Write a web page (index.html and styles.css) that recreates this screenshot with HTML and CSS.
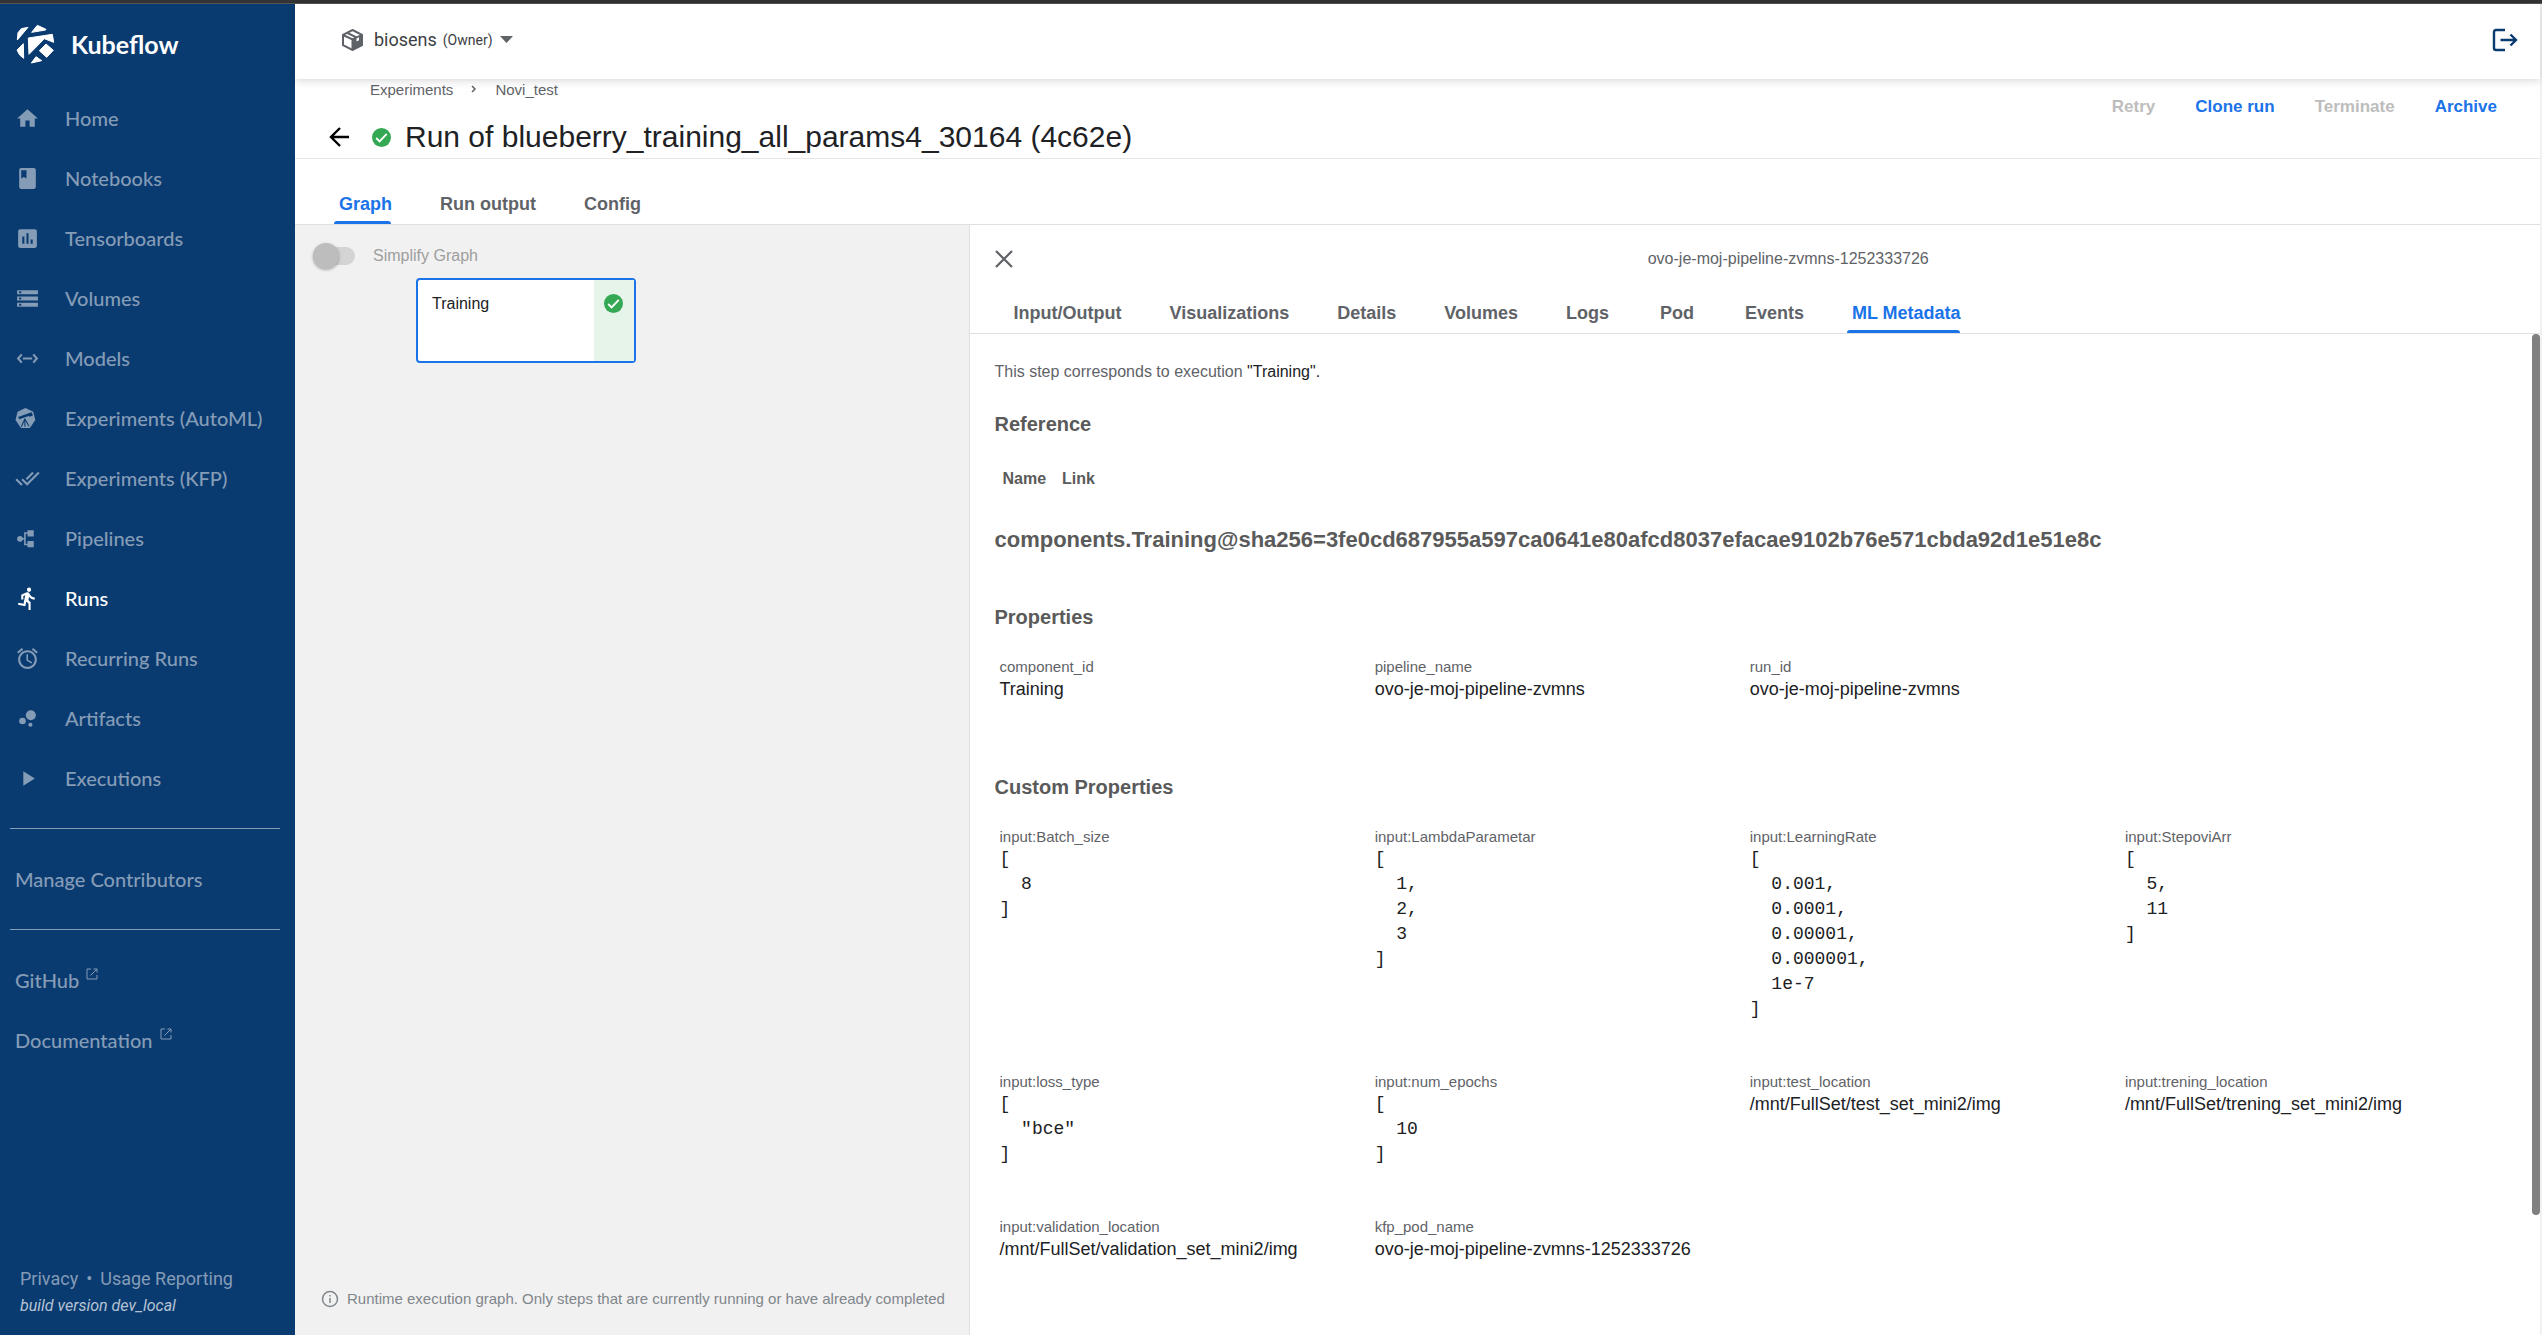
FILE: index.html
```html
<!DOCTYPE html>
<html lang="en">
<head>
<meta charset="utf-8">
<title>Kubeflow Central Dashboard</title>
<link rel="stylesheet" href="styles.css">
</head>
<body>
<div class="window-edge"></div>
<div class="app">
  <aside class="sidebar">
    <a class="brand" href="#">
      <svg class="brand-logo" viewBox="47 72 117 120" aria-hidden="true"><g fill="#fff" stroke="#fff" stroke-width="3" stroke-linejoin="round"><path d="M51 120L53 98 63 86 83 82zM94 97L111 76 137 88 136 90zM50 150L69 131 70 175 58 165zM84 114L156 103 160 127 132 116 86 163zM117 152L137 132 159 151 139 172zM107 170L124 182 93 189z"/></g></svg>
      <span>Kubeflow</span>
    </a>
    <nav class="nav">
      <a class="nav-item" href="#"><svg class="icon" viewBox="0 0 24 24"><path d="M10 20v-6h4v6h5v-8h3L12 3 2 12h3v8z"/></svg>Home</a>
      <a class="nav-item" href="#"><svg class="icon" viewBox="0 0 24 24"><path fill-rule="evenodd" d="M18 2H6c-1.100 0-2 .9-2 2v16c0 1.100.9 2 2 2h12c1.100 0 2-.9 2-2V4c0-1.100-.9-2-2-2zM6 4h5v8l-2.500-1.500L6 12V4z"/></svg>Notebooks</a>
      <a class="nav-item" href="#"><svg class="icon" viewBox="0 0 24 24"><path d="M19 3H5c-1.100 0-2 .9-2 2v14c0 1.100.9 2 2 2h14c1.100 0 2-.9 2-2V5c0-1.100-.9-2-2-2zM9 17H7v-7h2v7zm4 0h-2V7h2v10zm4 0h-2v-4h2v4z"/></svg>Tensorboards</a>
      <a class="nav-item" href="#"><svg class="icon" viewBox="0 0 24 24"><path d="M2 20h20v-4H2v4zm2-3h2v2H4v-2zM2 4v4h20V4H2zm4 3H4V5h2v2zm-4 7h20v-4H2v4zm2-3h2v2H4v-2z"/></svg>Volumes</a>
      <a class="nav-item" href="#"><svg class="icon line" viewBox="0 0 24 24"><path d="M6.500 8L3 12l3.500 4M17.500 8L21 12l-3.500 4M7.500 12h9"/></svg>Models</a>
      <a class="nav-item" href="#"><svg class="icon" viewBox="0 0 24 24"><path d="M10 2l7.500 3.500 2 8-5.200 7.500H5.700L.5 13.500l2-8z"/><path class="cut" d="M3 10.500l10-3.500 3-1 1.200 3.200-3 1-1-.6L4 12.700z"/><path class="cut-line" d="M9.500 12v8M9.500 12.500L6 20M9.500 12.500l4 7"/></svg>Experiments (AutoML)</a>
      <a class="nav-item" href="#"><svg class="icon" viewBox="0 0 24 24"><path d="M18 7l-1.410-1.410-6.340 6.340 1.410 1.410L18 7zm4.240-1.410L11.660 16.170 7.480 12l-1.410 1.410L11.660 19l12-12-1.420-1.410zM.41 13.410L6 19l1.410-1.410L1.830 12 .41 13.410z"/></svg>Experiments (KFP)</a>
      <a class="nav-item" href="#"><svg class="icon" viewBox="0 0 24 24"><path d="M12 4h6v6h-6zM12 14.500h6v6h-6z"/><circle cx="4.800" cy="12.300" r="2.800"/><path class="thin" d="M5 12.300h4.500M13 6.800H9.500v11H13"/></svg>Pipelines</a>
      <a class="nav-item active" href="#"><svg class="icon" viewBox="0 0 24 24"><path d="M13.490 5.480c1.100 0 2-.9 2-2s-.9-2-2-2-2 .9-2 2 .9 2 2 2zm-3.600 13.900l1-4.400 2.100 2v6h2v-7.500l-2.100-2 .6-3c1.300 1.500 3.300 2.500 5.500 2.500v-2c-1.900 0-3.500-1-4.300-2.400l-1-1.600c-.4-.6-1-1-1.700-1-.3 0-.5.1-.8.1l-5.200 2.200v4.700h2v-3.400l1.800-.7-1.600 8.100-4.900-1-.4 2 7 1.400z"/></svg>Runs</a>
      <a class="nav-item" href="#"><svg class="icon" viewBox="0 0 24 24"><path d="M22 5.720l-4.600-3.860-1.290 1.530 4.600 3.860L22 5.720zM7.880 3.390L6.600 1.860 2 5.710l1.290 1.530 4.590-3.850zM12.500 8H11v6l4.750 2.850.75-1.230-4-2.370V8zM12 4c-4.970 0-9 4.030-9 9s4.020 9 9 9c4.970 0 9-4.030 9-9s-4.030-9-9-9zm0 16c-3.870 0-7-3.130-7-7s3.130-7 7-7 7 3.130 7 7-3.130 7-7 7z"/></svg>Recurring Runs</a>
      <a class="nav-item" href="#"><svg class="icon" viewBox="0 0 24 24"><circle cx="7.200" cy="14.400" r="3.200"/><circle cx="14.800" cy="18" r="2"/><circle cx="15.200" cy="8.800" r="4.800"/></svg>Artifacts</a>
      <a class="nav-item" href="#"><svg class="icon" viewBox="0 0 24 24"><path d="M8 5v14l11-7z"/></svg>Executions</a>
      <hr class="nav-rule">
      <a class="nav-item plain" href="#">Manage Contributors</a>
      <hr class="nav-rule">
      <a class="nav-item plain" href="#">GitHub<svg class="ext" viewBox="0 0 12 12"><path d="M5 1H1v10h10V7M7.500 1H11v3.500M11 1L4.500 7.500"/></svg></a>
      <a class="nav-item plain" href="#">Documentation<svg class="ext" viewBox="0 0 12 12"><path d="M5 1H1v10h10V7M7.500 1H11v3.500M11 1L4.500 7.500"/></svg></a>
    </nav>
    <footer class="side-footer">
      <div class="legal"><a href="#">Privacy</a><span>•</span><a href="#">Usage Reporting</a></div>
      <em class="build">build version dev_local</em>
    </footer>
  </aside>

  <main class="content">
    <header class="topbar">
      <button class="namespace" type="button">
        <svg class="cube" viewBox="0 0 21 22"><path d="M10.500 1L20 5.800v10.400L10.500 21 1 16.200V5.800z" fill="#fff" stroke="#5f6368" stroke-width="2"/><path d="M10.500 10.500L20 6v10.200L10.500 21z" fill="#5f6368"/><path d="M1 6l9.500 4.500L20 6M10.500 10.500V21M5.500 4l9.500 4.600" fill="none" stroke="#5f6368" stroke-width="2"/><path d="M14.500 9.500l2.500-1.200v3l-2.500 1.200z" fill="#fff"/></svg>
        <span class="ns-name">biosens</span><span class="ns-role">(Owner)</span>
        <svg class="caret" viewBox="0 0 13 7"><path d="M0 0h13L6.500 7z" fill="#5f6368"/></svg>
      </button>
      <a class="logout" href="#" aria-label="Logout"><svg viewBox="0 0 26 24"><path d="M13 2H4Q2 2 2 4v16q0 2 2 2h9M8.500 12H24M18.500 6.500L24 12l-5.500 5.500" fill="none" stroke="#0a3b70" stroke-width="2.400"/></svg></a>
    </header>

    <section class="toolbar">
      <div class="heading">
        <nav class="crumbs"><a href="#">Experiments</a><svg viewBox="0 0 6 8"><path d="M1 1l3 3-3 3" fill="none" stroke="#5f6368" stroke-width="1.500"/></svg><a href="#">Novi_test</a></nav>
        <div class="title-row">
          <button class="back" type="button" aria-label="Back"><svg viewBox="0 0 21 20"><path d="M20 10H2M11 1L2 10l9 9" fill="none" stroke="#000" stroke-width="2.400"/></svg></button>
          <svg class="ok" viewBox="0 0 18 18"><circle cx="9" cy="9" r="9" fill="#34a853"/><path d="M4 9.500l3.200 3.200L14 5.500" fill="none" stroke="#fff" stroke-width="1.800"/></svg>
          <h1>Run of blueberry_training_all_params4_30164 (4c62e)</h1>
        </div>
      </div>
      <div class="actions">
        <button type="button" disabled>Retry</button>
        <button type="button">Clone run</button>
        <button type="button" disabled>Terminate</button>
        <button type="button">Archive</button>
      </div>
    </section>

    <nav class="tabs page-tabs">
      <button class="tab selected" type="button">Graph</button>
      <button class="tab" type="button">Run output</button>
      <button class="tab" type="button">Config</button>
    </nav>

    <div class="workspace">
      <section class="graph">
        <label class="simplify"><input type="checkbox" disabled><span>Simplify Graph</span></label>
        <div class="node"><span class="node-name">Training</span><span class="node-state"><svg class="ok" viewBox="0 0 18 18"><circle cx="9" cy="9" r="9" fill="#34a853"/><path d="M4 9.500l3.200 3.200L14 5.500" fill="none" stroke="#fff" stroke-width="1.800"/></svg></span></div>
        <p class="graph-note"><svg viewBox="0 0 18 18"><circle cx="9" cy="9" r="7.500" fill="none" stroke="#80868b" stroke-width="1.500"/><path d="M9 8v5M9 5v1.600" stroke="#80868b" stroke-width="1.500"/></svg><span>Runtime execution graph. Only steps that are currently running or have already completed</span></p>
      </section>

      <section class="panel">
        <header class="panel-head">
          <button class="close" type="button" aria-label="Close"><svg viewBox="0 0 18 18"><path d="M1 1l16 16M17 1L1 17" stroke="#5f6368" stroke-width="2.200"/></svg></button>
          <div class="panel-title">ovo-je-moj-pipeline-zvmns-1252333726</div>
        </header>
        <nav class="tabs panel-tabs">
          <button class="tab" type="button">Input/Output</button>
          <button class="tab" type="button">Visualizations</button>
          <button class="tab" type="button">Details</button>
          <button class="tab" type="button">Volumes</button>
          <button class="tab" type="button">Logs</button>
          <button class="tab" type="button">Pod</button>
          <button class="tab" type="button">Events</button>
          <button class="tab selected" type="button">ML Metadata</button>
        </nav>
        <div class="panel-body">
          <div class="details">
            <p class="step">This step corresponds to execution <a href="#">"Training".</a></p>
            <h3>Reference</h3>
            <table class="refs"><thead><tr><th>Name</th><th>Link</th></tr></thead></table>
            <h2>components.Training@sha256=3fe0cd687955a597ca0641e80afcd8037efacae9102b76e571cbda92d1e51e8c</h2>
            <h3>Properties</h3>
            <dl class="props">
              <div><dt>component_id</dt><dd>Training</dd></div>
              <div><dt>pipeline_name</dt><dd>ovo-je-moj-pipeline-zvmns</dd></div>
              <div><dt>run_id</dt><dd>ovo-je-moj-pipeline-zvmns</dd></div>
            </dl>
            <h3 class="custom">Custom Properties</h3>
            <dl class="props">
              <div><dt>input:Batch_size</dt><dd><pre>[
  8
]</pre></dd></div>
              <div><dt>input:LambdaParametar</dt><dd><pre>[
  1,
  2,
  3
]</pre></dd></div>
              <div><dt>input:LearningRate</dt><dd><pre>[
  0.001,
  0.0001,
  0.00001,
  0.000001,
  1e-7
]</pre></dd></div>
              <div><dt>input:StepoviArr</dt><dd><pre>[
  5,
  11
]</pre></dd></div>
              <div><dt>input:loss_type</dt><dd><pre>[
  "bce"
]</pre></dd></div>
              <div><dt>input:num_epochs</dt><dd><pre>[
  10
]</pre></dd></div>
              <div><dt>input:test_location</dt><dd>/mnt/FullSet/test_set_mini2/img</dd></div>
              <div><dt>input:trening_location</dt><dd>/mnt/FullSet/trening_set_mini2/img</dd></div>
              <div><dt>input:validation_location</dt><dd>/mnt/FullSet/validation_set_mini2/img</dd></div>
              <div><dt>kfp_pod_name</dt><dd>ovo-je-moj-pipeline-zvmns-1252333726</dd></div>
            </dl>
          </div>
          <div class="scrollbar"><div class="thumb"></div></div>
        </div>
      </section>
    </div>
  </main>
</div>
</body>
</html>
```
FILE: styles.css
```css
* { box-sizing: border-box; }
body {
  margin: 0;
  height: 100vh;
  display: flex;
  flex-direction: column;
  overflow: hidden;
  font-family: "Liberation Sans", Arial, sans-serif;
  font-size: 16px;
  color: #202124;
}
a { color: inherit; text-decoration: none; }
button { border: 0; background: none; padding: 0; font: inherit; color: inherit; }
h1, h2, h3, p, dl, dd, pre { margin: 0; }
svg { display: block; flex: none; }

.window-edge { flex: none; height: 4px; background: #333; border-bottom: 1px solid #555; }
.app { flex: 1; display: flex; min-height: 0; }

/* Sidebar */
.sidebar {
  flex: none;
  width: 295px;
  display: flex;
  flex-direction: column;
  background: #0a3b70;
  color: #859cb7;
  font-family: Lato, "Open Sans", sans-serif;
}
.brand {
  display: flex;
  align-items: center;
  gap: 16px;
  height: 80px;
  margin-bottom: 4px;
  padding-left: 16px;
  color: #fff;
  font-size: 25px;
  font-weight: 700;
}
.brand-logo { width: 39px; height: 40px; }
.nav-item {
  display: flex;
  align-items: center;
  gap: 25px;
  height: 60px;
  padding-left: 15px;
  font-size: 20px;
  font-weight: 500;
}
.nav-item.plain { gap: 7px; }
.nav-item.active { color: #fff; }
.icon { width: 25px; height: 25px; fill: currentColor; }
.icon.line { fill: none; stroke: currentColor; stroke-width: 2; }
.icon .thin { fill: none; stroke: currentColor; stroke-width: 1.5; }
.icon .cut { fill: #0a3b70; }
.icon .cut-line { fill: none; stroke: #0a3b70; stroke-width: 1; }
.ext { width: 12px; height: 12px; margin-bottom: 12px; fill: none; stroke: currentColor; }
.nav-rule { height: 1px; margin: 20px 15px 20px 10px; border: 0; background: #859cb7; }
.side-footer { margin-top: auto; padding: 0 20px 15px; font-family: Roboto, sans-serif; }
.legal { display: flex; gap: 8px; font-size: 18px; line-height: 26px; }
.build { display: block; font-size: 16px; line-height: 28px; color: #b5c3d4; }

/* Top bar */
.content { flex: 1; min-width: 0; display: flex; flex-direction: column; border-right: 2px solid #f1f1f1; background: #fff; }
.topbar {
  position: relative;
  z-index: 1;
  flex: none;
  display: flex;
  justify-content: space-between;
  align-items: center;
  height: 75px;
  padding: 0 22px 4px 47px;
  box-shadow: 0 2px 8px rgba(0, 0, 0, .15);
  background: #fff;
}
.namespace { display: flex; align-items: center; color: #3c4043; font-family: Roboto, sans-serif; }
.cube { width: 21px; height: 22px; margin-right: 11px; }
.ns-name { font-size: 18px; margin-right: 6px; }
.ns-role { font-size: 14px; margin-right: 7px; }
.caret { width: 13px; height: 7px; }
.logout svg { width: 26px; height: 24px; }

/* Run toolbar */
.toolbar { flex: none; display: flex; justify-content: space-between; height: 80px; border-bottom: 1px solid #e6e6e6; }
.crumbs { display: flex; align-items: center; height: 20px; padding-left: 75px; gap: 18px; font-size: 15px; color: #5f6368; }
.crumbs svg { width: 6px; height: 8px; }
.title-row { display: flex; align-items: center; height: 59px; padding: 17px 0 0 34px; }
.back svg { width: 21px; height: 20px; }
.title-row .back { margin-right: 22px; }
.ok { width: 19px; height: 19px; }
.title-row h1 { margin-left: 14px; font-size: 30px; font-weight: 400; }
.actions { display: flex; align-items: flex-start; gap: 40px; padding: 17px 43px 0 0; color: #1a73e8; font-weight: 700; font-size: 17px; line-height: 22px; }
.actions button:disabled { color: #bdbdbd; }

/* Tabs */
.tabs { flex: none; display: flex; border-bottom: 1px solid #e0e0e0; color: #5f6368; font-size: 18px; font-weight: 700; }
.page-tabs { height: 66px; padding: 26px 0 0 19px; }
.panel-tabs { height: 41px; padding-left: 19px; }
.tab { position: relative; min-width: 88px; padding: 0 23px 0 25px; }
.tab.selected { color: #1a73e8; }
.tab.selected::after {
  content: "";
  position: absolute;
  left: 20px;
  right: 24px;
  bottom: 0;
  height: 3px;
  border-radius: 3px 3px 0 0;
  background: #1a73e8;
}

/* Graph canvas */
.workspace { flex: 1; min-height: 0; display: flex; }
.graph { position: relative; flex: 1; min-width: 0; display: flex; flex-direction: column; background: #f1f1f1; }
.simplify { display: flex; align-items: center; gap: 18px; height: 62px; padding-left: 18px; color: #9e9e9e; font-size: 16px; }
.simplify input {
  appearance: none;
  display: flex;
  align-items: center;
  width: 42px;
  height: 18px;
  margin: 0;
  border-radius: 9px;
  background: #d4d4d4;
}
.simplify input::before { content: ""; width: 26px; height: 26px; border-radius: 50%; background: #bdbdbd; box-shadow: 0 1px 3px rgba(0, 0, 0, .3); }
.node {
  position: absolute;
  left: 121px;
  top: 53px;
  width: 220px;
  height: 85px;
  display: flex;
  border: 2px solid #1a73e8;
  border-radius: 4px;
  background: #fff;
}
.node-name { flex: 1; padding: 14px; font-size: 16px; line-height: 20px; }
.node-state { width: 40px; padding: 14px 10px; background: #e6f4ea; }
.graph-note { display: flex; align-items: center; gap: 8px; margin-top: auto; padding: 0 0 26px 26px; font-size: 15px; line-height: 20px; color: #80868b; white-space: nowrap; }
.graph-note svg { width: 18px; height: 18px; }

/* Side panel */
.panel { width: 70%; display: flex; flex-direction: column; border-left: 1px solid #e0e0e0; background: #fff; }
.panel-head { flex: none; display: flex; align-items: center; height: 68px; padding-left: 25px; color: #5f6368; font-size: 16px; }
.close svg { width: 18px; height: 18px; }
.panel-title { flex: 1; padding-left: 24px; text-align: center; }
.panel-body { flex: 1; min-height: 0; display: flex; }
.details { flex: 1; min-width: 0; padding: 26px 32px 0 25px; line-height: 24px; overflow: hidden; }
.scrollbar { width: 8px; }
.thumb { height: 88%; border-radius: 4px; background: #808080; }
.step { color: #5f6368; font-size: 16px; }
.step a { color: #202124; }
h3 { margin-top: 28px; font-size: 20px; color: #5a5a5a; }
.refs { margin-top: 28px; border-collapse: collapse; color: #5a5a5a; font-size: 16px; }
.refs th { padding: 3px 8px; }
.details h2 { margin: 32px 0 51px; font-size: 22px; line-height: 28px; color: #5a5a5a; }
.details h2 + h3 { margin-top: 0; }
.props { display: grid; grid-template-columns: repeat(4, 1fr); row-gap: 50px; margin-top: 28px; padding-left: 5px; }
.props dt { font-size: 15px; line-height: 20px; color: #5f6368; }
.props dd { font-size: 18px; line-height: 25px; }
.props pre { font-family: "Liberation Mono", monospace; font-size: 18px; line-height: 25px; }
h3.custom { margin-top: 73px; }
```
